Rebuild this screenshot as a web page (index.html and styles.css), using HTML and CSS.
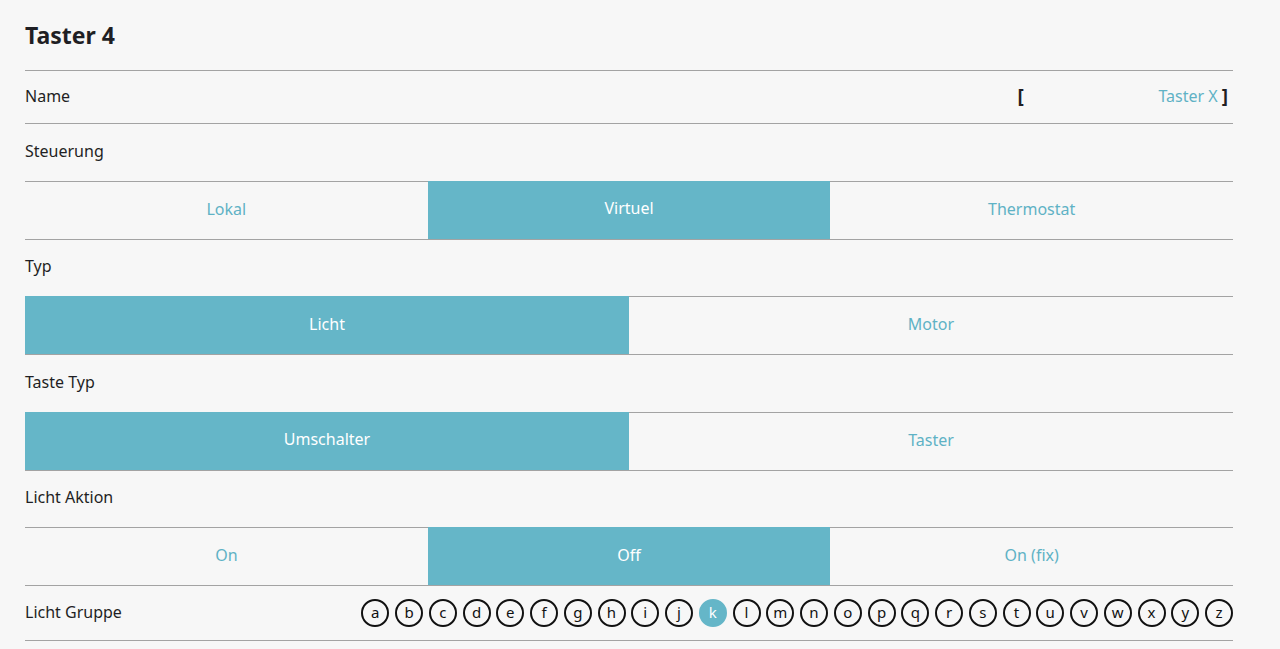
FILE: index.html
```html
<!DOCTYPE html>
<html lang="de">
<head>
<meta charset="utf-8">
<title>Taster 4</title>
<link rel="stylesheet" href="styles.css">
</head>
<body>
<div class="page">
  <h1 class="title">Taster 4</h1>
  <div class="name-row">
    <span class="label">Name</span>
    <div class="name-field">
      <span class="bracket">[</span>
      <input class="name-input" type="text" value="Taster X">
      <span class="bracket">]</span>
    </div>
  </div>

  <div class="label-row">Steuerung</div>
  <div class="seg">
    <div class="opt">Lokal</div>
    <div class="opt active">Virtuel</div>
    <div class="opt">Thermostat</div>
  </div>

  <div class="label-row">Typ</div>
  <div class="seg">
    <div class="opt active">Licht</div>
    <div class="opt">Motor</div>
  </div>

  <div class="label-row">Taste Typ</div>
  <div class="seg">
    <div class="opt active">Umschalter</div>
    <div class="opt">Taster</div>
  </div>

  <div class="label-row">Licht Aktion</div>
  <div class="seg">
    <div class="opt">On</div>
    <div class="opt active">Off</div>
    <div class="opt">On (fix)</div>
  </div>

  <div class="group-row">
    <span class="label">Licht Gruppe</span>
    <div class="letters">
      <span class="letter">a</span><span class="letter">b</span><span class="letter">c</span><span class="letter">d</span><span class="letter">e</span><span class="letter">f</span><span class="letter">g</span><span class="letter">h</span><span class="letter">i</span><span class="letter">j</span><span class="letter on">k</span><span class="letter">l</span><span class="letter">m</span><span class="letter">n</span><span class="letter">o</span><span class="letter">p</span><span class="letter">q</span><span class="letter">r</span><span class="letter">s</span><span class="letter">t</span><span class="letter">u</span><span class="letter">v</span><span class="letter">w</span><span class="letter">x</span><span class="letter">y</span><span class="letter">z</span>
    </div>
  </div>
</div>
</body>
</html>
```

FILE: styles.css
```css
html, body {
  margin: 0;
  padding: 0;
  background: #f7f7f7;
}
body {
  font-family: "Noto Sans", "DejaVu Sans", sans-serif;
  color: #1f1f24;
  font-size: 16px;
}
.page {
  width: 1208px;
  padding: 0 0 0 25px;
}
.title {
  margin: 0;
  display: flex;
  align-items: center;
  font-size: 23px;
  font-weight: 700;
  line-height: 1;
  border-bottom: 1px solid #a3a3a3;
  padding-bottom: 0;
  box-sizing: border-box;
  height: 71px;
}
.name-row {
  height: 53px;
  display: flex;
  align-items: center;
  justify-content: space-between;
  border-bottom: 1px solid #a3a3a3;
  box-sizing: border-box;
  padding-bottom: 2px;
}
.label {
  font-size: 16px;
}
.name-field {
  display: flex;
  align-items: center;
  gap: 4px;
  margin-right: 5px;
}
.bracket {
  font-weight: 700;
  font-size: 19px;
  color: #1f1f24;
}
.name-input {
  width: 190px;
  border: none;
  background: transparent;
  text-align: right;
  font-family: inherit;
  font-size: 16px;
  color: #5fb2c5;
  padding: 0;
  outline: none;
}
.label-row {
  height: 56.5px;
  display: flex;
  align-items: center;
  box-sizing: border-box;
  padding-bottom: 3px;
}
.seg {
  display: flex;
  border-top: 1px solid #a3a3a3;
  border-bottom: 1px solid #a3a3a3;
  height: 59px;
  box-sizing: border-box;
}
.opt {
  flex: 1 1 0;
  display: flex;
  align-items: center;
  justify-content: center;
  color: #5fb2c5;
  font-size: 16px;
  padding-bottom: 3px;
}
.opt.active {
  background: #65b6c8;
  color: #ffffff;
  margin-top: -1px;
}
.group-row {
  height: 55px;
  display: flex;
  align-items: center;
  justify-content: space-between;
  border-bottom: 1px solid #a3a3a3;
  box-sizing: border-box;
}
.group-row .label {
  padding-bottom: 2px;
}
.letters {
  display: flex;
  gap: 5.76px;
}
.letter {
  width: 28px;
  height: 28px;
  box-sizing: border-box;
  border: 2px solid #111;
  border-radius: 50%;
  display: flex;
  align-items: center;
  justify-content: center;
  font-size: 15px;
  line-height: 1;
  padding-bottom: 2px;
  color: #111;
}
.letter.on {
  background: #65b6c8;
  border-color: #65b6c8;
  color: #fff;
}
```
